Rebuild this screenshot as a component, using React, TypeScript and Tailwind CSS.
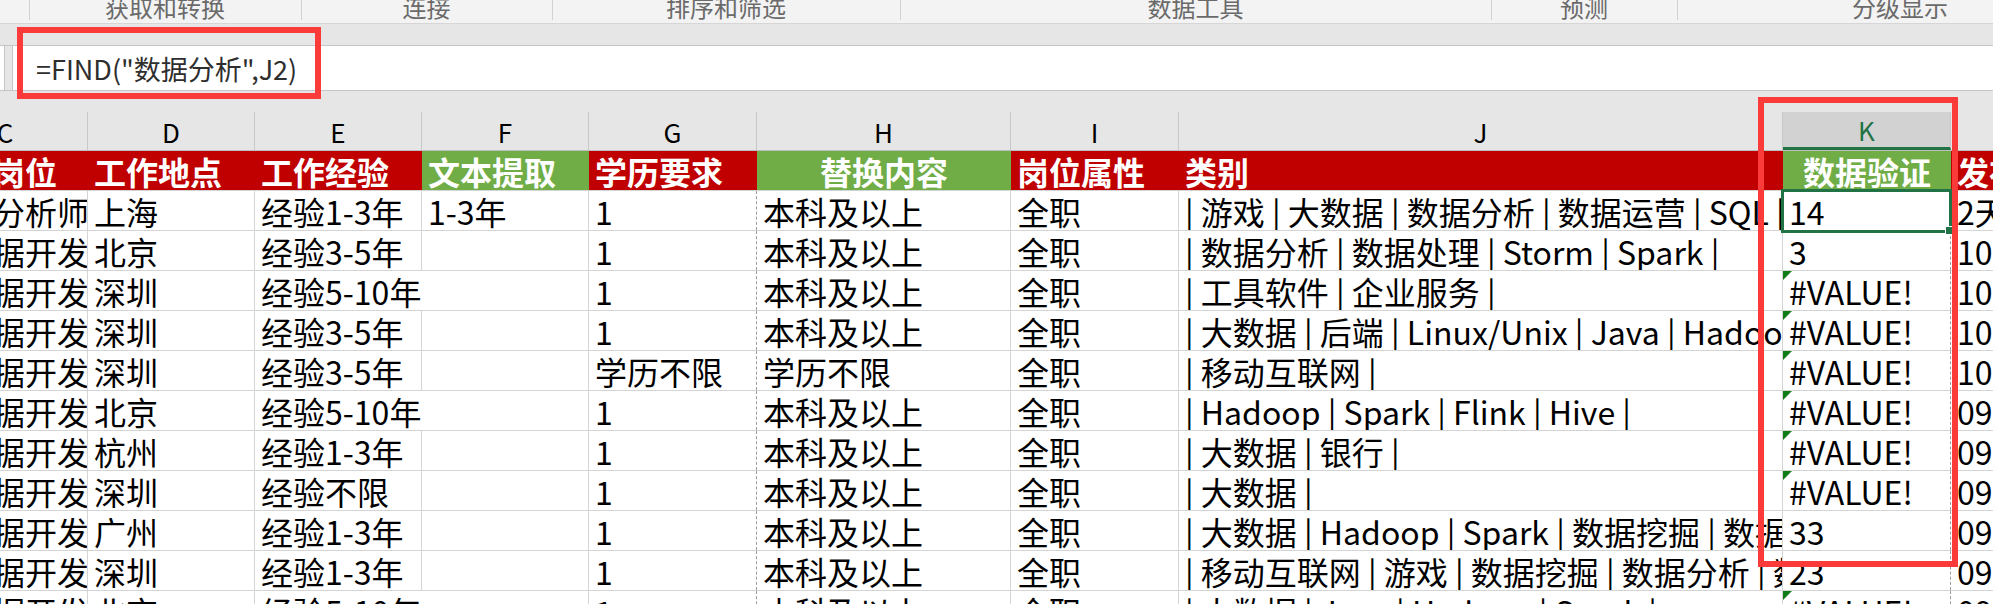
import React from "react";

// column widths, written out so tailwind picks them up
const COLS = [
  "w-[165px] ml-[-77px] overflow-hidden", // C (scrolled off to the left)
  "w-[167px]", // D
  "w-[167px]", // E
  "w-[167px]", // F
  "w-[168px]", // G
  "w-[254px]", // H
  "w-[168px]", // I
  "w-[604px] overflow-hidden", // J
  "w-[168px]", // K
  "w-[200px]", // L
];

const LETTERS = ["C", "D", "E", "F", "G", "H", "I", "J", "K", "L"];

const HEADERS = [
  { text: "招聘岗位", bg: "bg-[#c00000]", center: false },
  { text: "工作地点", bg: "bg-[#c00000]", center: false },
  { text: "工作经验", bg: "bg-[#c00000]", center: false },
  { text: "文本提取", bg: "bg-[#70ad47]", center: false },
  { text: "学历要求", bg: "bg-[#c00000]", center: false },
  { text: "替换内容", bg: "bg-[#70ad47]", center: true },
  { text: "岗位属性", bg: "bg-[#c00000]", center: false },
  { text: "类别", bg: "bg-[#c00000]", center: false },
  { text: "数据验证", bg: "bg-[#70ad47]", center: true },
  { text: "发布时间", bg: "bg-[#c00000]", center: false },
];

const ROWS: string[][] = [
  ["数据分析师", "上海", "经验1-3年", "1-3年", "1", "本科及以上", "全职", "| 游戏 | 大数据 | 数据分析 | 数据运营 | SQL |", "14", "2天前发布"],
  ["大数据开发", "北京", "经验3-5年", "", "1", "本科及以上", "全职", "| 数据分析 | 数据处理 | Storm | Spark |", "3", "10:32发布"],
  ["大数据开发", "深圳", "经验5-10年", "", "1", "本科及以上", "全职", "| 工具软件 | 企业服务 |", "#VALUE!", "10:21发布"],
  ["大数据开发", "深圳", "经验3-5年", "", "1", "本科及以上", "全职", "| 大数据 | 后端 | Linux/Unix | Java | Hadoop |", "#VALUE!", "10:15发布"],
  ["大数据开发", "深圳", "经验3-5年", "", "学历不限", "学历不限", "全职", "| 移动互联网 |", "#VALUE!", "10:02发布"],
  ["大数据开发", "北京", "经验5-10年", "", "1", "本科及以上", "全职", "| Hadoop | Spark | Flink | Hive |", "#VALUE!", "09:58发布"],
  ["大数据开发", "杭州", "经验1-3年", "", "1", "本科及以上", "全职", "| 大数据 | 银行 |", "#VALUE!", "09:47发布"],
  ["大数据开发", "深圳", "经验不限", "", "1", "本科及以上", "全职", "| 大数据 |", "#VALUE!", "09:40发布"],
  ["大数据开发", "广州", "经验1-3年", "", "1", "本科及以上", "全职", "| 大数据 | Hadoop | Spark | 数据挖掘 | 数据分析 |", "33", "09:36发布"],
  ["大数据开发", "深圳", "经验1-3年", "", "1", "本科及以上", "全职", "| 移动互联网 | 游戏 | 数据挖掘 | 数据分析 | 数据仓库 |", "23", "09:31发布"],
  ["大数据开发", "北京", "经验5-10年", "", "1", "本科及以上", "全职", "| 大数据 | Java | Hadoop | Spark |", "#VALUE!", "09:25发布"],
];

const RIBBON = [
  { label: "", w: "w-[29px]" },
  { label: "获取和转换", w: "w-[272px]" },
  { label: "连接", w: "w-[251px]" },
  { label: "排序和筛选", w: "w-[348px]" },
  { label: "数据工具", w: "w-[591px]" },
  { label: "预测", w: "w-[186px]" },
  { label: "分级显示", w: "w-[446px]" },
];

function DataRow({ cells }: { cells: string[] }) {
  return (
    <div className="flex h-[40px] shrink-0 border-b border-[#d4d4d4]">
      {cells.map((text, i) => {
        // E spills into the empty F cell, so its gridline is hidden
        const spill = i === 2 && text.length > 6;
        let border = "border-r border-[#d4d4d4]";
        if (spill) border = "";
        if (i === 4) border = "border-r border-dashed border-[#9a9a9a]";
        if (i === 8) border = "border-r border-dashed border-[#9a9a9a]";
        const isError = i === 8 && text === "#VALUE!";
        return (
          <div
            key={i}
            className={`${COLS[i]} ${border} relative shrink-0 h-full pl-[6px] whitespace-nowrap leading-[40px] text-black`}
          >
            {isError && (
              <span className="absolute left-0 top-0 w-0 h-0 border-t-[9px] border-t-[#0e7d17] border-r-[9px] border-r-transparent" />
            )}
            {text}
          </div>
        );
      })}
    </div>
  );
}

export default function App() {
  return (
    <div className="relative w-[1993px] h-[604px] overflow-hidden bg-white font-['Noto_Sans_CJK_SC','Noto_Sans',sans-serif] text-[32px]">
      {/* Ribbon group labels */}
      <div className="flex h-[24px] bg-[#f3f3f3] border-b border-[#d6d6d6] overflow-hidden">
        {RIBBON.map((g, i) => (
          <div
            key={i}
            className={`${g.w} shrink-0 relative flex justify-center`}
          >
            {i > 0 && (
              <span className="absolute left-0 top-0 h-[20px] border-l border-[#d2d2d2]" />
            )}
            <span className="text-[24px] leading-[24px] text-[#6a6a6a] mt-[-5px]">
              {g.label}
            </span>
          </div>
        ))}
      </div>

      <div className="h-[21px] bg-[#e6e6e6]" />

      {/* Formula bar */}
      <div className="flex h-[46px] bg-[#e6e6e6] border-y border-[#c6c6c6]">
        <div className="w-[5px] bg-white border-r border-[#c6c6c6]" />
        <div className="w-[7px]" />
        <div className="flex-1 bg-white border-l border-[#c6c6c6] flex items-center pl-[23px]">
          <span className="text-[27px] text-[#2e2e2e] leading-none">
            =FIND("数据分析",J2)
          </span>
        </div>
      </div>

      <div className="h-[21px] bg-[#e6e6e6]" />

      {/* Column letters */}
      <div className="flex h-[39px] bg-[#e6e6e6] border-b border-[#bdbdbd]">
        {LETTERS.map((l, i) => {
          const sel = l === "K";
          return (
            <div
              key={l}
              className={`${COLS[i]} shrink-0 flex items-center justify-center border-r border-[#c8c8c8] text-[26px] ${
                sel
                  ? "bg-[#d2d2d2] text-[#217346] border-b-[3px] border-b-[#217346]"
                  : "text-black"
              }`}
            >
              {l}
            </div>
          );
        })}
      </div>

      {/* Header row */}
      <div className="flex h-[40px] border-b border-[#d4d4d4]">
        {HEADERS.map((h, i) => (
          <div
            key={i}
            className={`${COLS[i]} ${h.bg} shrink-0 h-full whitespace-nowrap leading-[40px] font-bold text-white ${
              h.center ? "text-center" : "pl-[6px]"
            }`}
          >
            {h.text}
          </div>
        ))}
      </div>

      {ROWS.map((r, i) => (
        <DataRow key={i} cells={r} />
      ))}

      {/* Active cell K2 */}
      <div className="absolute left-[1781px] top-[189px] w-[171px] h-[44px] border-[3px] border-[#217346]" />
      <div className="absolute left-[1945px] top-[226px] w-[9px] h-[9px] bg-[#217346] border border-white" />

      {/* Red annotations */}
      <div className="absolute left-[17px] top-[27px] w-[304px] h-[72px] border-[6px] border-[#fb3a3a]" />
      <div className="absolute left-[1758px] top-[97px] w-[200px] h-[470px] border-[6px] border-[#fb3a3a]" />
    </div>
  );
}
